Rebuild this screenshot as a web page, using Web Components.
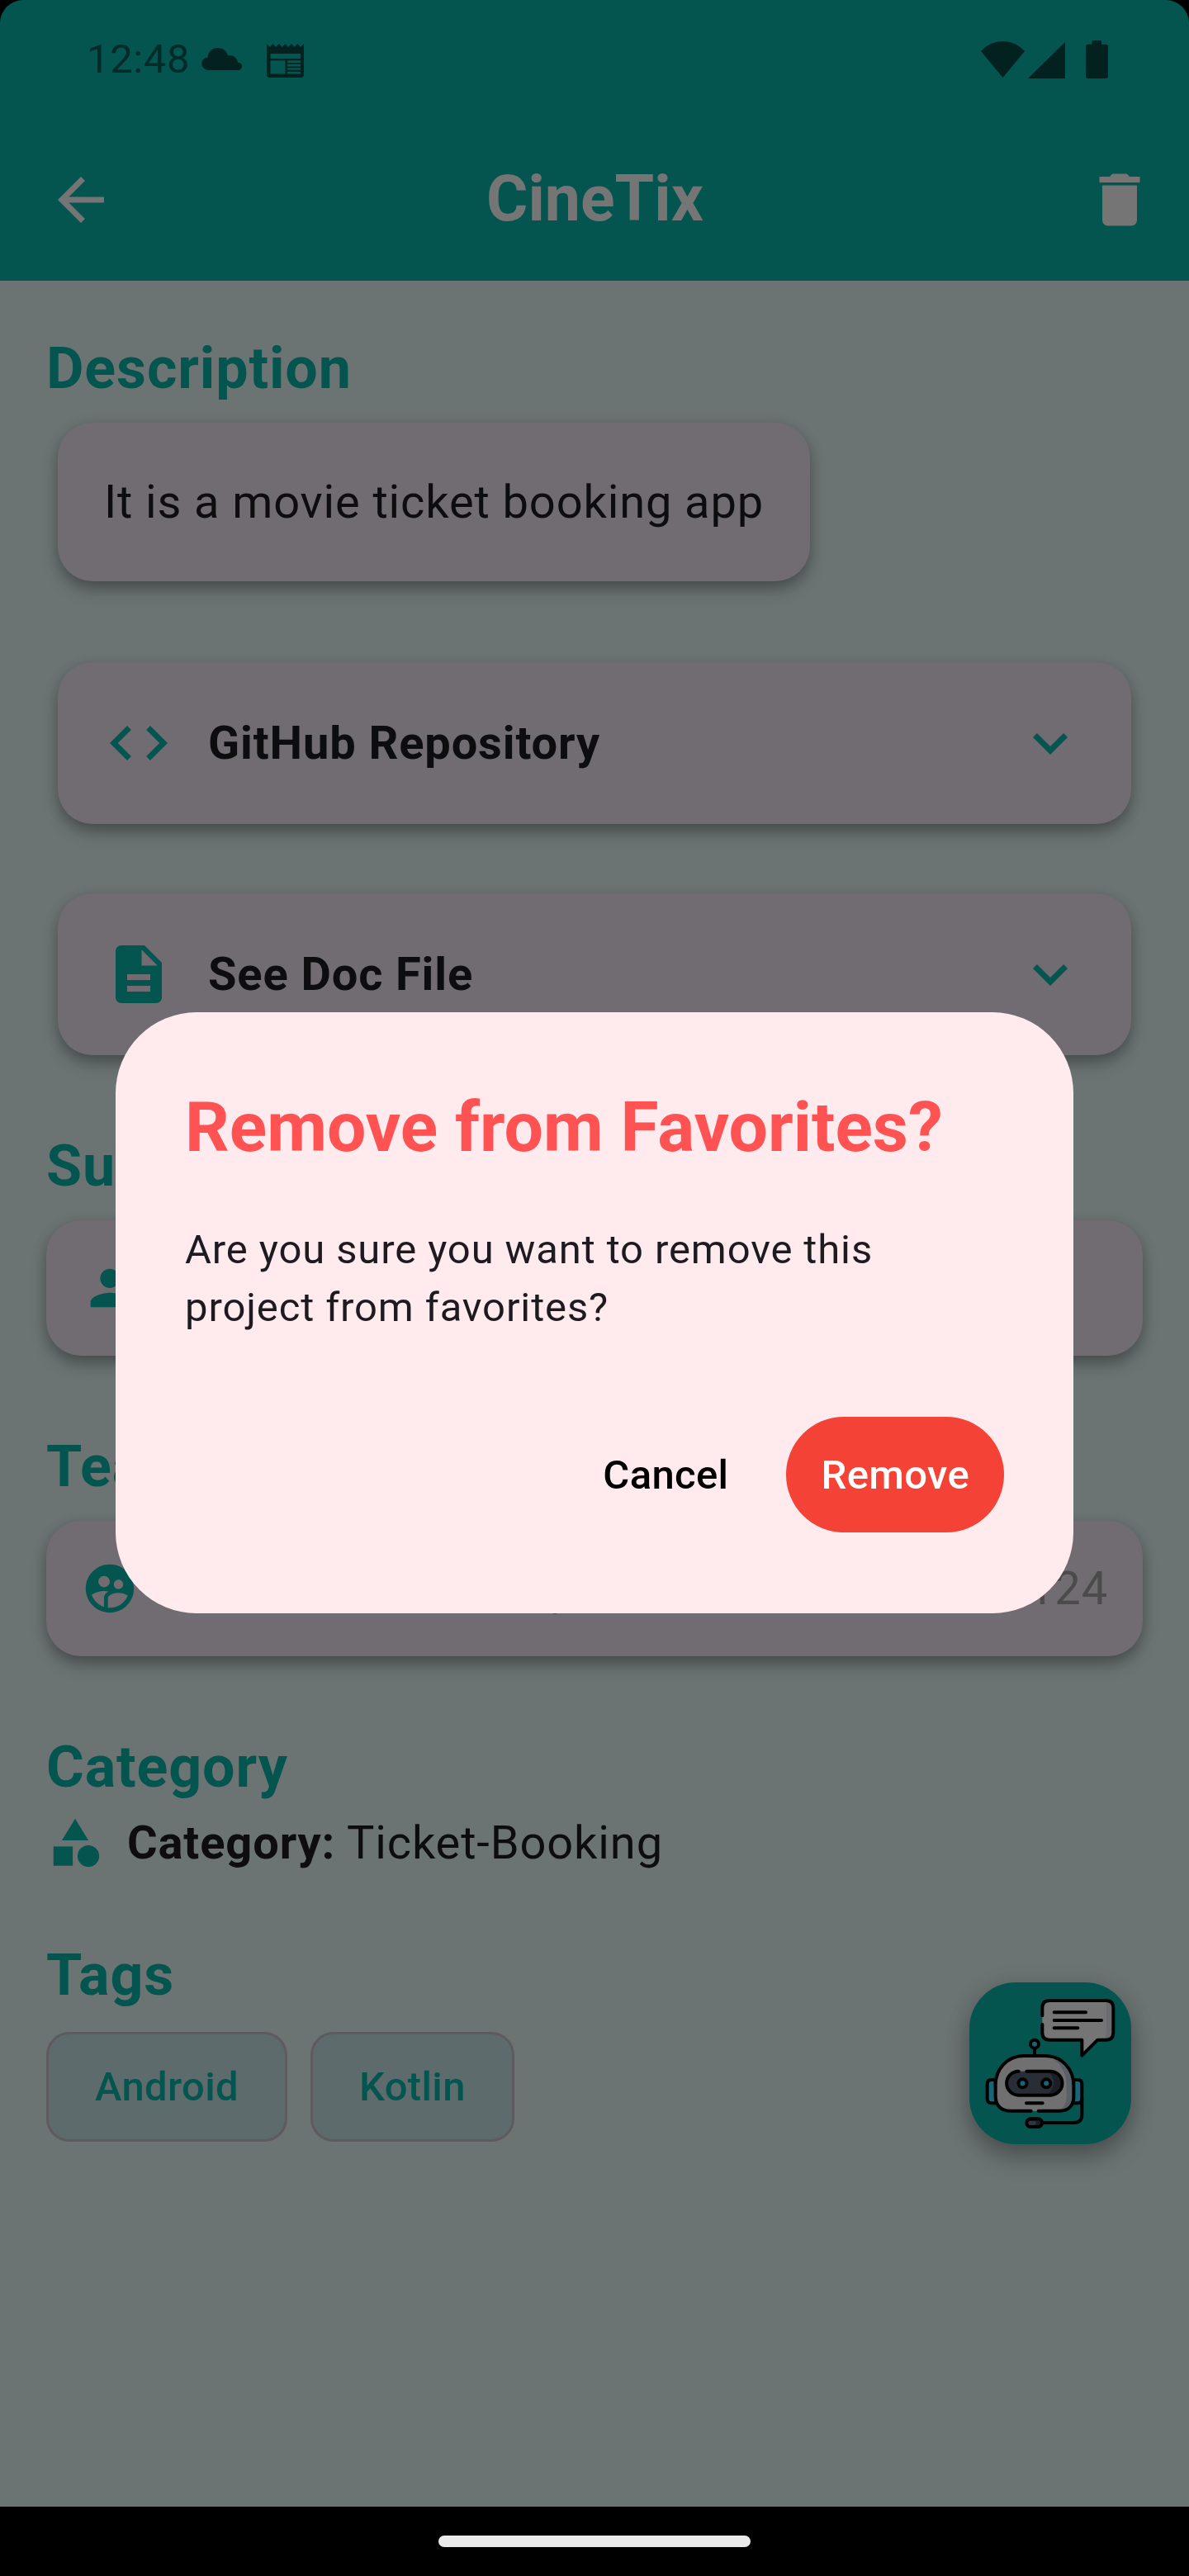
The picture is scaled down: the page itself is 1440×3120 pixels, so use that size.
<!DOCTYPE html>
<html lang="en">
<head>
<meta charset="utf-8">
<title>CineTix</title>
<style>
html,body{margin:0;background:#000}
body{font-family:Roboto,"Liberation Sans",sans-serif;color:#0d0d0f;width:1440px;height:3120px;overflow:hidden}
</style>
</head>
<body>
<cine-app></cine-app>
<script>
const ICONS={
back:'<path d="M20 11H7.83l5.59-5.59L12 4l-8 8 8 8 1.41-1.41L7.83 13H20v-2z"/>',
trash:'<path d="M6 19c0 1.1.9 2 2 2h8c1.1 0 2-.9 2-2V7H6v12zM19 4h-3.5l-1-1h-5l-1 1H5v2h14V4z"/>',
code:'<path d="M9.4 16.6 4.8 12l4.6-4.6L8 6l-6 6 6 6 1.4-1.4zm5.2 0 4.6-4.6-4.6-4.6L16 6l6 6-6 6-1.4-1.4z"/>',
doc:'<path d="M14 2H6c-1.1 0-1.99.9-1.99 2L4 20c0 1.1.89 2 1.99 2H18c1.1 0 2-.9 2-2V8l-6-6zm2 16H8v-2h8v2zm0-4H8v-2h8v2zm-3-5V3.5L18.5 9H13z"/>',
chevron:'<path d="M16.59 8.59 12 13.17 7.41 8.59 6 10l6 6 6-6z"/>',
person:'<path d="M12 12c2.21 0 4-1.79 4-4s-1.79-4-4-4-4 1.79-4 4 1.79 4 4 4zm0 2c-2.67 0-8 1.34-8 4v2h16v-2c0-2.66-5.33-4-8-4z"/>',
group:'<path d="M12 2C6.48 2 2 6.48 2 12s4.48 10 10 10 10-4.48 10-10S17.52 2 12 2zm3.61 6.34c1.07 0 1.93.86 1.93 1.93 0 1.07-.86 1.93-1.93 1.93-1.07 0-1.93-.86-1.93-1.93-.01-1.07.86-1.93 1.93-1.93zm-6-1.58c1.3 0 2.36 1.06 2.36 2.36 0 1.3-1.06 2.36-2.36 2.36s-2.36-1.06-2.36-2.36c0-1.31 1.05-2.36 2.36-2.36zm0 9.13v3.75c-2.4-.75-4.3-2.6-5.14-4.96 1.05-1.12 3.67-1.69 5.14-1.69.53 0 1.2.08 1.9.22-1.64.87-1.9 2.02-1.9 2.68zM12 20c-.27 0-.53-.01-.79-.04v-4.07c0-1.42 2.94-2.13 4.4-2.13 1.07 0 2.92.39 3.84 1.15C18.28 17.88 15.39 20 12 20z"/>',
category:'<path d="m12 2-5.5 9h11z"/><circle cx="17.5" cy="17.5" r="4.5"/><path d="M3 13.5h8v8H3z"/>'
};
const def=(name,css,html)=>customElements.define(name,class extends HTMLElement{
  connectedCallback(){
    if(this.shadowRoot)return;
    const t=document.createElement('template');
    t.innerHTML='<style>:host{display:block;box-sizing:border-box}'+css+'</style>'+(typeof html==='function'?html(this):html);
    this.attachShadow({mode:'open'}).append(t.content.cloneNode(true));
  }
});
def('md-icon',':host{flex:none;width:var(--s,84px);height:var(--s,84px)}svg{display:block;width:100%;height:100%;fill:currentColor}',
  e=>`<svg viewBox="0 0 24 24">${ICONS[e.getAttribute('name')]}</svg>`);
def('status-bar',':host{height:144px;padding:0 98px 0 105px;display:flex;justify-content:space-between;color:#02211f}div{display:flex}span{font-size:49px;line-height:58px;letter-spacing:.6px;padding-top:43px;width:139px;white-space:nowrap;color:#022a28}svg{display:block;fill:currentColor;flex:none}',
`<div><span>12:48</span>
<svg width="49" height="27" viewBox="0 0 49 27" style="margin-top:58px"><path d="M8 27A8 8 0 0 1 .3 19C.3 14.500 3.500 12 7.600 11.500 8 4.500 13 0 20 0c6 0 10.500 3.600 12 9.200 6-.8 11 2.400 12 8.300C47 18 49 19.600 49 22c0 3-2 5-5 5z"/></svg>
<svg width="45" height="41" viewBox="0 0 45 41" style="margin:53px 0 0 30px"><path fill-rule="evenodd" d="M0 0l4 4 3.600-4 3.600 4L15 0l3.700 4 3.700-4 3.700 4 3.800-4 3.700 4 3.700-4 3.700 4L45 0v37q0 4-4 4H4q-4 0-4-4zM4.500 12v6H41v-6zM4.500 20.300V36.500H22.500V20.300zM25 20.300v2.600h16v-2.600zm0 4.500v2.600h16v-2.600zm0 4.400v2.600h16v-2.600zm0 4.600v2.600h16v-2.600z"/></svg></div>
<div><svg width="53" height="44" viewBox="0 0 53 44" style="margin-top:50px"><path d="M26.500 44 0 12Q11 0 26.500 0T53 12z"/></svg>
<svg width="45" height="44" viewBox="0 0 45 44" style="margin:51px 0 0 4px"><path d="M45 0v44H0z"/></svg>
<svg width="27" height="46" viewBox="0 0 27 46" style="margin:49px 0 0 25px"><path d="M7.500 0h11.500v4.700H24q3 0 3 3V43q0 3-3 3H3q-3 0-3-3V7.700q0-3 3-3h4.500z"/></svg></div>`);
def('app-bar',':host{display:flex;align-items:center;justify-content:space-between;height:196px;padding:0 42px 0 56px;color:#757575}h1{margin:0 13px 3px 0;font-size:77px;line-height:90px;font-weight:700}',
'<md-icon name="back"></md-icon><h1><slot></slot></h1><md-icon name="trash"></md-icon>');
def('section-title',':host{height:100px;line-height:100px;font-size:70px;font-weight:700;color:#045550;letter-spacing:.875px;white-space:nowrap}','<slot></slot>');
def('surface-card',':host{display:flex;align-items:center;background:#706c71;border-radius:42px;font-size:56px;letter-spacing:.875px;white-space:nowrap;box-shadow:0 12px 20px -2px rgba(0,0,0,.27),0 3px 16px rgba(0,0,0,.14)}','<slot></slot>');
def('expand-row',':host{margin:0 14px}surface-card{height:196px;padding:0 56px}md-icon{color:#045550}b{flex:1;margin-left:42px;font-weight:700}',
e=>`<surface-card><md-icon name="${e.getAttribute('icon')}"></md-icon><b><slot></slot></b><md-icon name="chevron"></md-icon></surface-card>`);
def('member-row','surface-card{height:164px;padding:0 42px}md-icon{--s:70px;color:#045550}.name{margin-left:489px;flex:1}.id{color:#4b4b4c}',
e=>`<surface-card><md-icon name="${e.getAttribute('icon')}"></md-icon><span class="name"><slot></slot></span><span class="id"><slot name="id"></slot></span></surface-card>`);
def('category-row',':host{display:flex;align-items:center;height:70px;font-size:56px;letter-spacing:.875px;white-space:pre}md-icon{--s:70px;color:#045550;margin-right:28px}b{font-weight:700}',
'<md-icon name="category"></md-icon><span><b><slot name="label"></slot></b> <slot></slot></span>');
def('tag-chip',':host{height:133px;padding:0 56px;border:3.5px solid #5f5a60;border-radius:28px;background:#5d6b6c;color:#045550;display:flex;align-items:center;font-size:49px;font-weight:500;letter-spacing:.35px}','<slot></slot>');
def('chat-fab',':host{position:absolute;left:1174px;top:2401px;width:196px;height:196px;border-radius:56px;background:#045550;box-shadow:0 16px 30px -2px rgba(0,0,0,.28),0 4px 30px rgba(0,0,0,.12)}svg{display:block}',
`<svg width="196" height="196" viewBox="72 93 588 588" fill="none" stroke="#000" stroke-width="12" stroke-linecap="round" stroke-linejoin="round">
<path d="M337 214V186q0-27 27-27H568q27 0 27 27V275q0 27-27 27H538L481 359V302H364q-27 0-27-27V246V214" fill="#757575" stroke="none"/>
<path d="M570 162q25 3 25 27v83q0 27-27 30h-18q20-5 20-30z" fill="#6c6c70" stroke="none"/>
<path d="M337 214V186q0-27 27-27H568q27 0 27 27V275q0 27-27 27H538L481 359V302H364q-27 0-27-27V246M380 202H495M380 231H552M380 259H466"/>
<path d="M309 334v22"/><circle cx="309" cy="317" r="15" fill="#1a6478"/>
<path d="M166 447h-13q-16 0-16 16v53q0 16 16 16h18zM451 447h14q16 0 16 16v53q0 16-16 16h-18z" fill="#1a6478"/>
<path d="M270 360h78c60 0 103 48 103 108v42c0 32-22 50-50 50H219c-32 0-52-20-52-54v-40c0-58 43-106 103-106z" fill="#707070" stroke="none"/>
<path d="M366 363c50 10 85 52 85 105v42c0 32-22 50-50 50h-14c30-8 38-28 38-56v-40c0-44-22-78-59-101z" fill="#5a6067" stroke="none"/>
<rect x="208" y="416" width="201" height="87" rx="43.500" fill="#292d36" stroke="none"/><path d="M358 416h8a43.500 43.500 0 0 1 0 87h-14c34-25 34-60 6-87z" fill="#1b1e26" stroke="none"/>
<path d="M296 560H219c-32 0-52-20-52-54v-40c0-58 43-106 103-106h78c60 0 103 48 103 108v42c0 32-22 50-50 50H323"/>
<path d="M251 416a43.500 43.500 0 0 0 0 87H366a43.500 43.500 0 0 0 0-87H280M279 532h59"/>
<circle cx="265.500" cy="460" r="15" fill="#1a6478"/><circle cx="351.500" cy="460" r="15" fill="#1a6478"/>
<path d="M481 516v58q0 29-29 29H338"/><rect x="280" y="589" width="56" height="29" rx="14" fill="#1b1e26"/><path d="M293 604h14" stroke="#33363e" stroke-width="14"/></svg>`);
def('pill-button',':host{height:140px;display:flex;align-items:center;justify-content:center;border-radius:70px;font-size:49px;font-weight:500;letter-spacing:.35px;padding:0 42px}:host([filled]){background:#f44336;color:#fff}','<slot></slot>');
def('confirm-dialog',':host{position:absolute;left:140px;top:1226px;width:1160px;height:728px;border-radius:98px;background:#ffebee;padding:84px}h2{margin:0;font-size:84px;line-height:112px;font-weight:700;color:#ff5252;white-space:nowrap}p{margin:57px 0 0;font-size:49px;line-height:70px;letter-spacing:.875px;color:#1d1b20;white-space:pre}div{display:flex;justify-content:flex-end;gap:28px;margin-top:97px;color:#000}',
`<h2><slot name="title"></slot></h2><p><slot></slot></p><div><slot name="actions"></slot></div>`);
def('nav-bar',':host{height:84px;background:#000;display:flex;justify-content:center;padding-top:35px}i{width:378px;height:14px;border-radius:7px;background:#ebebeb}','<i></i>');
def('cine-app',':host{position:relative;width:1440px;height:3120px;background:#000}header{background:#045550;height:340px;border-radius:28px 28px 0 0}main{background:#6b7473;height:2696px;box-sizing:border-box;padding:56px 56px 0}.chips{display:flex;gap:28px;margin-top:19px}',
`<header><status-bar></status-bar><app-bar>CineTix</app-bar></header>
<main>
<section-title>Description</section-title>
<surface-card style="width:max-content;height:192px;padding:0 56px;margin:16px 0 0 14px;box-sizing:border-box">It is a movie ticket booking app</surface-card>
<expand-row icon="code" style="margin-top:98px">GitHub Repository</expand-row>
<expand-row icon="doc" style="margin-top:84px">See Doc File</expand-row>
<section-title style="margin-top:84px">Supervisor</section-title>
<member-row icon="person" style="margin-top:16px"></member-row>
<section-title style="margin-top:84px">Team</section-title>
<member-row icon="group" style="margin-top:16px">g<span slot="id">124</span></member-row>
<section-title style="margin-top:84px">Category</section-title>
<category-row style="margin-top:7px"><span slot="label">Category:</span>Ticket-Booking</category-row>
<section-title style="margin-top:75px">Tags</section-title>
<div class="chips"><tag-chip>Android</tag-chip><tag-chip>Kotlin</tag-chip></div>
</main>
<nav-bar></nav-bar>
<chat-fab></chat-fab>
<confirm-dialog><span slot="title">Remove from Favorites?</span>Are you sure you want to remove this
project from favorites?<pill-button slot="actions">Cancel</pill-button><pill-button slot="actions" filled>Remove</pill-button></confirm-dialog>`);
</script>
</body>
</html>
